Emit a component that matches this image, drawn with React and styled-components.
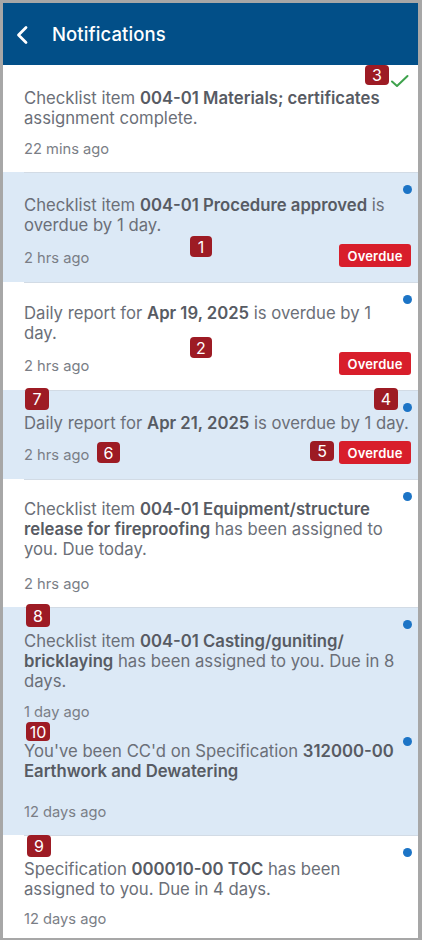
import React from 'react'
import styled, { createGlobalStyle } from 'styled-components'

const GlobalStyle = createGlobalStyle`
  html, body {
    margin: 0;
    padding: 0;
    background: #ffffff;
  }
  body {
    font-family: Inter, 'Noto Sans', sans-serif;
    -webkit-font-smoothing: antialiased;
  }
`

const Page = styled.div`
  position: relative;
  width: 422px;
  height: 942px;
`

const Frame = styled.div`
  box-sizing: border-box;
  width: 422px;
  height: 940px;
  border-style: solid;
  border-color: #a7a7a7;
  border-width: 3px 4px 2px 3px;
  display: flex;
  flex-direction: column;
  overflow: hidden;
  background: #ffffff;
`

const Header = styled.div`
  flex: none;
  height: 62px;
  background: #024f88;
  display: flex;
  align-items: center;
  padding-left: 12px;
  gap: 21px;
`

const BackIcon = styled.svg`
  width: 16px;
  height: 20px;
  margin-top: 1px;
`

const Title = styled.h1`
  margin: 0;
  color: #ffffff;
  font-size: 18.5px;
  font-weight: 500;
  letter-spacing: 0.1px;
`

const List = styled.div`
  flex: 1;
  display: flex;
  flex-direction: column;
`

const Item = styled.div`
  position: relative;
  padding: ${p => p.$pt}px 7px ${p => p.$pb}px 21px;
  background-color: ${p => (p.$unread ? '#dce9f6' : '#ffffff')};
  background-image: ${p =>
    p.$divider ? 'linear-gradient(#d2dbe5, #d2dbe5)' : 'none'};
  background-repeat: no-repeat;
  background-position: 21px 0;
  background-size: calc(100% - 21px) 1px;
`

const Message = styled.div`
  color: #6b6f78;
  font-size: 16.7px;
  line-height: 20px;
`

const Line = styled.div`
  white-space: nowrap;
`

const Strong = styled.span`
  color: #575b63;
  font-weight: 600;
`

const Footer = styled.div`
  display: flex;
  align-items: flex-end;
  justify-content: space-between;
  margin-top: ${p => p.$gap}px;
`

const Time = styled.span`
  color: #7a7e86;
  font-size: 14.7px;
  line-height: 18px;
`

const OverdueTag = styled.span`
  box-sizing: border-box;
  height: 23px;
  width: 72px;
  border-radius: 3px;
  background: #d81e2b;
  color: #ffffff;
  font-size: 13px;
  font-weight: 600;
  display: flex;
  align-items: center;
  justify-content: center;
  letter-spacing: 0.2px;
`

const UnreadDot = styled.span`
  position: absolute;
  top: 13px;
  right: 6px;
  width: 9px;
  height: 9px;
  border-radius: 50%;
  background: #1c74c6;
`

const DoneIcon = styled.svg`
  position: absolute;
  top: 9px;
  right: 9px;
  width: 19px;
  height: 14px;
`

const Marker = styled.span`
  position: absolute;
  left: ${p => p.$x}px;
  top: ${p => p.$y}px;
  width: ${p => p.$w}px;
  height: ${p => p.$h}px;
  border-radius: 4px;
  background: #9d1b24;
  color: #ffffff;
  font-size: 16px;
  line-height: 1;
  display: flex;
  align-items: center;
  justify-content: center;
`

const notifications = [
  {
    lines: [
      ['Checklist item ', ['004-01 Materials; certificates']],
      ['assignment complete.']
    ],
    time: '22 mins ago',
    done: true,
    pt: 23,
    gap: 12,
    pb: 14
  },
  {
    lines: [
      ['Checklist item ', ['004-01 Procedure approved'], ' is'],
      ['overdue by 1 day.']
    ],
    time: '2 hrs ago',
    unread: true,
    dot: true,
    overdue: true,
    pt: 23,
    gap: 9,
    pb: 15
  },
  {
    lines: [
      ['Daily report for ', ['Apr 19, 2025'], ' is overdue by 1'],
      ['day.']
    ],
    time: '2 hrs ago',
    dot: true,
    overdue: true,
    pt: 21,
    gap: 9,
    pb: 15
  },
  {
    lines: [['Daily report for ', ['Apr 21, 2025'], ' is overdue by 1 day.']],
    time: '2 hrs ago',
    unread: true,
    dot: true,
    overdue: true,
    pt: 23,
    gap: 8,
    pb: 15
  },
  {
    lines: [
      ['Checklist item ', ['004-01 Equipment/structure']],
      [['release for fireproofing'], ' has been assigned to'],
      ['you. Due today.']
    ],
    time: '2 hrs ago',
    dot: true,
    pt: 20,
    gap: 16,
    pb: 14
  },
  {
    lines: [
      ['Checklist item ', ['004-01 Casting/guniting/']],
      [['bricklaying'], ' has been assigned to you. Due in 8'],
      ['days.']
    ],
    time: '1 day ago',
    unread: true,
    dot: true,
    pt: 24,
    gap: 12,
    pb: 3
  },
  {
    lines: [
      ["You've been CC'd on Specification ", ['312000-00']],
      [['Earthwork and Dewatering']]
    ],
    time: '12 days ago',
    unread: true,
    dot: true,
    noDivider: true,
    pt: 17,
    gap: 22,
    pb: 14
  },
  {
    lines: [
      ['Specification ', ['000010-00 TOC'], ' has been'],
      ['assigned to you. Due in 4 days.']
    ],
    time: '12 days ago',
    dot: true,
    pt: 24,
    gap: 11,
    pb: 10
  }
]

const markers = [
  { n: 1, x: 190, y: 236, w: 22, h: 21 },
  { n: 2, x: 190, y: 337, w: 22, h: 21 },
  { n: 3, x: 365, y: 65, w: 24, h: 20 },
  { n: 4, x: 374, y: 388, w: 24, h: 22 },
  { n: 5, x: 310, y: 441, w: 24, h: 20 },
  { n: 6, x: 97, y: 442, w: 23, h: 21 },
  { n: 7, x: 25, y: 388, w: 24, h: 22 },
  { n: 8, x: 26, y: 604, w: 24, h: 23 },
  { n: 9, x: 27, y: 835, w: 24, h: 22 },
  { n: 10, x: 26, y: 722, w: 24, h: 19 }
]

const Notification = ({ item, first }) => (
  <Item
    $unread={item.unread}
    $divider={!first && !item.noDivider}
    $pt={item.pt}
    $pb={item.pb}
  >
    <Message>
      {item.lines.map((line, i) => (
        <Line key={i}>
          {line.map((part, j) =>
            Array.isArray(part) ? <Strong key={j}>{part[0]}</Strong> : part
          )}
        </Line>
      ))}
    </Message>
    <Footer $gap={item.gap}>
      <Time>{item.time}</Time>
      {item.overdue && <OverdueTag>Overdue</OverdueTag>}
    </Footer>
    {item.dot && <UnreadDot />}
    {item.done && (
      <DoneIcon viewBox="0 0 19 14">
        <polyline
          points="2,7.5 7,12 17.5,2"
          fill="none"
          stroke="#3ea24c"
          strokeWidth="2"
          strokeLinecap="round"
          strokeLinejoin="round"
        />
      </DoneIcon>
    )}
  </Item>
)

export default () => {
  return (
    <>
      <GlobalStyle />
      <Page>
        <Frame>
          <Header>
            <BackIcon viewBox="0 0 16 20">
              <polyline
                points="11,2.5 3.5,10 11,17.5"
                fill="none"
                stroke="#ffffff"
                strokeWidth="2.8"
                strokeLinecap="round"
                strokeLinejoin="round"
              />
            </BackIcon>
            <Title>Notifications</Title>
          </Header>
          <List>
            {notifications.map((item, i) => (
              <Notification key={i} item={item} first={i === 0} />
            ))}
          </List>
        </Frame>
        {markers.map(m => (
          <Marker key={m.n} $x={m.x} $y={m.y} $w={m.w} $h={m.h}>
            {m.n}
          </Marker>
        ))}
      </Page>
    </>
  )
}
